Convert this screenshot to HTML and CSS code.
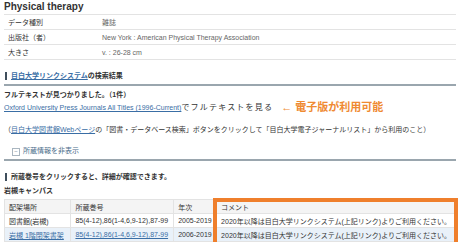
FILE: index.html
```html
<!DOCTYPE html>
<html lang="ja">
  <head>
    <meta charset="UTF-8" />
    <title>Physical therapy</title>
    <link rel="stylesheet" href="styles.css">
  </head>
  <body>
    <h1>Physical therapy</h1>
    <table class="info">
      <tr><th>データ種別</th><td>雑誌</td></tr>
      <tr><th>出版社（者）</th><td>New York : American Physical Therapy Association</td></tr>
      <tr><th>大きさ</th><td>v. : 26-28 cm</td></tr>
    </table>

    <h2 class="midashi"><a href="#">目白大学リンクシステム</a>の検索結果</h2>
    <p class="hit">フルテキストが見つかりました。（1件）</p>
    <p class="fulltext">
      <a href="#">Oxford University Press Journals All Titles (1996-Current)</a><span class="miru">でフルテキストを見る</span>
      <span class="chui">← 電子版が利用可能</span>
    </p>
    <p class="annai">（<a href="#">目白大学図書館Webページ</a>の「図書・データベース検索」ボタンをクリックして「目白大学電子ジャーナルリスト」から利用のこと）</p>

    <div class="toggle"><span class="minus">−</span>所蔵情報を非表示</div>

    <h3 class="midashi2">所蔵巻号をクリックすると、詳細が確認できます。</h3>
    <p class="campus">岩槻キャンパス</p>

    <div class="shozo-wrap">
      <table class="shozo">
        <tr><th class="c1">配架場所</th><th class="c2">所蔵巻号</th><th class="c3">年次</th><th>コメント</th></tr>
        <tr><td>図書館(岩槻)</td><td>85(4-12),86(1-4,6,9-12),87-99</td><td>2005-2019</td><td>2020年以降は目白大学リンクシステム(上記リンク)よりご利用ください。</td></tr>
        <tr class="ao"><td><a href="#">岩槻 1階閉架書架</a></td><td><a href="#">85(4-12),86(1-4,6,9-12),87-99</a></td><td>2006-2019</td><td>2020年以降は目白大学リンクシステム(上記リンク)よりご利用ください。</td></tr>
      </table>
      <div class="waku"></div>
    </div>
  </body>
</html>
```

FILE: styles.css
```css
body {
  margin: 0;
  padding: 0 4px;
  font-family: "Liberation Sans", "Noto Sans CJK JP", sans-serif;
  font-size: 7px;
  color: #333;
  background-color: #fff;
  overflow: hidden;
}
a {
  color: #3a6ea5;
}

h1 {
  margin: 0;
  height: 14px;
  line-height: 13px;
  font-size: 10px;
  color: #333;
}

.info {
  width: 100%;
  border-collapse: collapse;
}
.info th,
.info td {
  height: 14px;
  padding: 0 4px;
  border-top: 1px solid #e3e3e3;
  border-bottom: 1px solid #e3e3e3;
  text-align: left;
  font-weight: normal;
}
.info th {
  width: 86px;
  color: #333;
}
.info td {
  color: #666;
}

.midashi {
  margin: 11px 0 0 0;
  padding: 0 0 3px 7px;
  border-bottom: 2px solid #9aa6ae;
  font-size: 7px;
  line-height: 10px;
  position: relative;
}
.midashi::before,
.midashi2::before {
  content: "";
  position: absolute;
  left: 1px;
  top: 1px;
  width: 2px;
  height: 8px;
  background-color: #3f4e5c;
}

.hit {
  margin: 4px 0 0 0;
  font-weight: bold;
  line-height: 10px;
}
.fulltext {
  margin: 1px 0 0 0;
  line-height: 13px;
  height: 13px;
}
.miru {
  font-size: 8px;
  letter-spacing: 1.2px;
}
.chui {
  margin-left: 6px;
  color: #ef8a32;
  font-weight: bold;
  font-size: 11px;
  vertical-align: top;
}
.annai {
  margin: 11px 0 0 0;
  line-height: 10px;
}

.toggle {
  margin-top: 11px;
  padding: 0 0 3px 8px;
  border-bottom: 2px solid #9aa6ae;
  line-height: 10px;
  color: #4a6c8a;
}
.minus {
  display: inline-block;
  width: 6px;
  height: 6px;
  margin-right: 3px;
  border: 1px solid #aab6c0;
  line-height: 5px;
  text-align: center;
  font-size: 6px;
  color: #7a8a98;
}

.midashi2 {
  margin: 11px 0 0 0;
  padding-left: 7px;
  font-size: 7px;
  line-height: 10px;
  position: relative;
}
.campus {
  margin: 4px 0 0 0;
  font-weight: bold;
  line-height: 10px;
}

.shozo-wrap {
  position: relative;
  margin-top: 3px;
}
.shozo {
  width: 100%;
  border-collapse: collapse;
}
.shozo th,
.shozo td {
  height: 13px;
  padding: 0 4px;
  border: 1px solid #e3e3e3;
  text-align: left;
  font-weight: normal;
  white-space: nowrap;
}
.shozo th {
  background-color: #f4f4f4;
}
.shozo .c1 {
  width: 58px;
}
.shozo .c2 {
  width: 94px;
}
.shozo .c3 {
  width: 34px;
}
.shozo .ao td {
  background-color: #e9f1f9;
}

.waku {
  position: absolute;
  left: 209px;
  top: -1px;
  right: -2px;
  height: 43px;
  border: 4px solid #ef7f2c;
}
```
